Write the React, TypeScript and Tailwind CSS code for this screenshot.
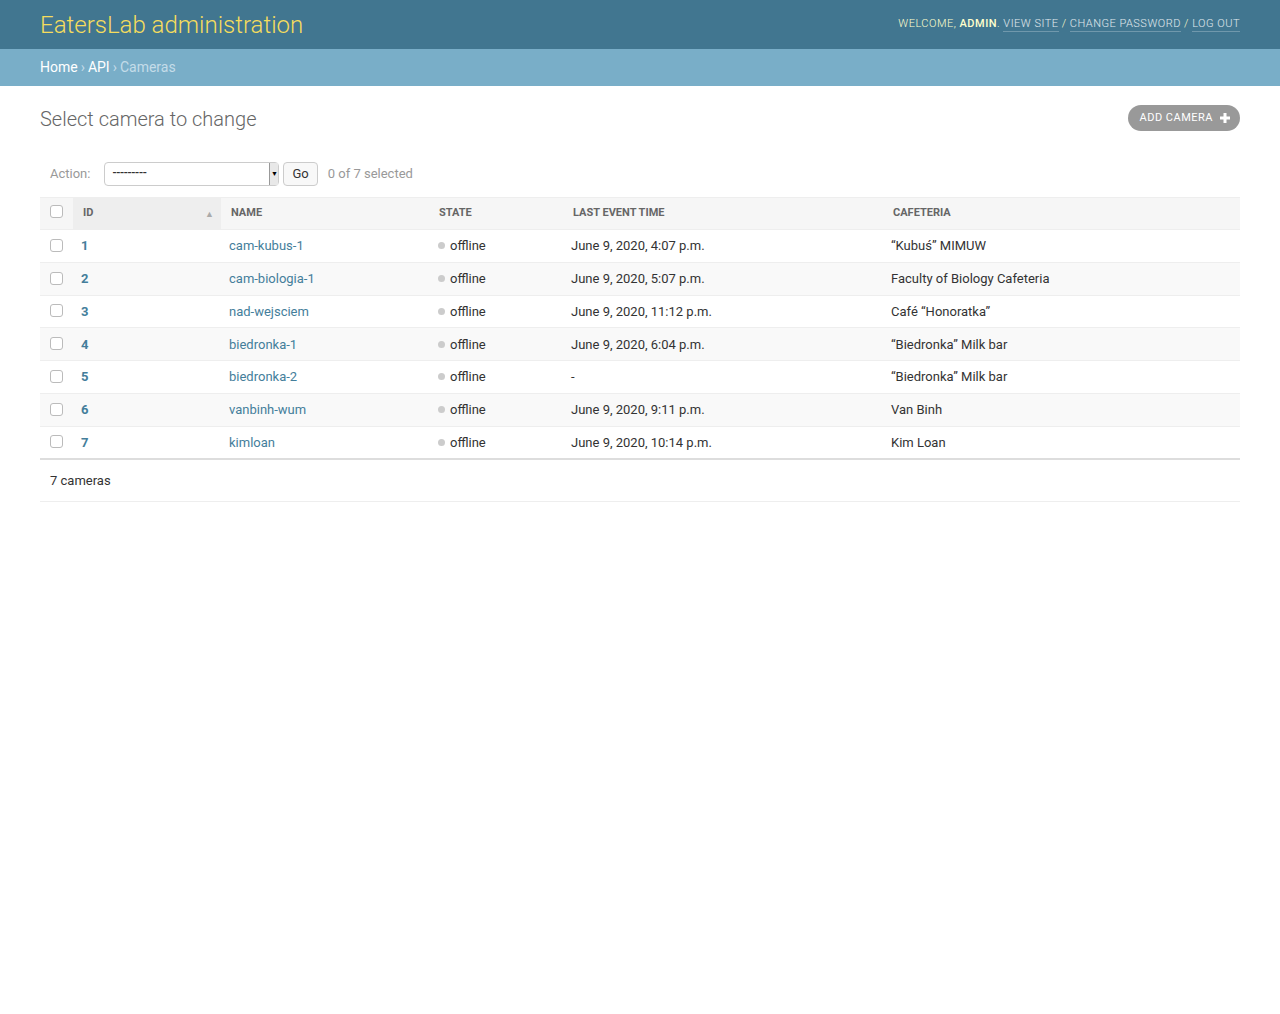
import React from 'react';

// Django admin change list — cameras
const rows = [
  { id: 1, name: 'cam-kubus-1', time: 'June 9, 2020, 4:07 p.m.', cafe: '“Kubuś” MIMUW' },
  { id: 2, name: 'cam-biologia-1', time: 'June 9, 2020, 5:07 p.m.', cafe: 'Faculty of Biology Cafeteria' },
  { id: 3, name: 'nad-wejsciem', time: 'June 9, 2020, 11:12 p.m.', cafe: 'Café “Honoratka”' },
  { id: 4, name: 'biedronka-1', time: 'June 9, 2020, 6:04 p.m.', cafe: '“Biedronka” Milk bar' },
  { id: 5, name: 'biedronka-2', time: '-', cafe: '“Biedronka” Milk bar' },
  { id: 6, name: 'vanbinh-wum', time: 'June 9, 2020, 9:11 p.m.', cafe: 'Van Binh' },
  { id: 7, name: 'kimloan', time: 'June 9, 2020, 10:14 p.m.', cafe: 'Kim Loan' },
];

function Checkbox() {
  return <span className="inline-block w-[13px] h-[13px] rounded-[3px] border border-[#bbb] bg-white align-middle -mt-[3px]" />;
}

export default function App() {
  return (
    <div className="min-h-[1014px] bg-white text-[#333]" style={{ fontFamily: 'Roboto, "Liberation Sans", sans-serif' }}>
      <header className="h-[49px] bg-[#417690] px-10 flex items-center justify-between">
        <h1 className="text-[24px] font-light text-[#f5dd5d] leading-none">EatersLab administration</h1>
        <div className="text-[11px] tracking-[0.5px] uppercase text-[#ffc] font-light flex items-center">
          <span>Welcome,&nbsp;</span>
          <strong className="font-medium">admin</strong>
          <span>.&nbsp;</span>
          <a className="text-white/85 border-b border-white/25 leading-[14px]">View site</a>
          <span>&nbsp;/&nbsp;</span>
          <a className="text-white/85 border-b border-white/25 leading-[14px]">Change password</a>
          <span>&nbsp;/&nbsp;</span>
          <a className="text-white/85 border-b border-white/25 leading-[14px]">Log out</a>
        </div>
      </header>

      <div className="h-[37px] bg-[#79aec8] px-10 flex items-center text-[14px] text-[#c4dce8]">
        <a className="text-white">Home</a>
        <span className="mx-[3px]">›</span>
        <a className="text-white">API</a>
        <span className="mx-[3px]">›</span>
        <span>Cameras</span>
      </div>

      <main className="px-10 pt-[18px]">
        <div className="flex items-center justify-between">
          <h1 className="text-[20px] font-light text-[#666] leading-[30px]">Select camera to change</h1>
          <a className="h-[26px] -mt-[2px] pl-3 pr-[10px] rounded-[15px] bg-[#999] text-white text-[11px] tracking-[0.5px] uppercase flex items-center gap-[7px]">
            Add camera
            <svg width="10" height="10" viewBox="0 0 10 10" className="fill-white">
              <rect x="3.5" y="0" width="3" height="10" />
              <rect x="0" y="3.5" width="10" height="3" />
            </svg>
          </a>
        </div>

        <div className="mt-[27px] h-[26px] px-[10px] flex items-center text-[13px] text-[#999]">
          <span className="mr-[14px]">Action:</span>
          <div className="w-[175px] h-[24px] border border-[#ccc] rounded-[4px] bg-white flex items-center justify-between pl-[7px] pr-0 text-[#333]">
            <span className="text-[12px] font-medium leading-none -mt-[2px] tracking-[-0.3px]">---------</span>
            <span className="w-[9px] h-[22px] border-l border-[#999] bg-[#e8e8e8] flex items-center justify-center text-[7px] text-black">▼</span>
          </div>
          <span className="ml-[4px] h-[24px] px-[8px] border border-[#ccc] rounded-[4px] bg-[#f8f8f8] text-[#333] flex items-center">Go</span>
          <span className="ml-[10px]">0 of 7 selected</span>
        </div>

        <table className="mt-[10px] w-full border-collapse text-[13px]">
          <thead>
            <tr className="h-[32px] bg-[#f6f6f6] border-t border-b border-[#eee] text-[11px] font-bold uppercase text-[#666] text-left">
              <th className="w-[33px] pl-[10px]"><Checkbox /></th>
              <th className="w-[148px] bg-[#eee] px-[10px]">
                <div className="flex items-center justify-between">
                  <span>ID</span>
                  <span className="text-[9px] text-[#aaa] mr-[-3px] mt-[2px]">▲</span>
                </div>
              </th>
              <th className="w-[210px] px-[10px]">Name</th>
              <th className="w-[134px] px-[8px]">State</th>
              <th className="w-[320px] px-[8px]">Last event time</th>
              <th className="px-[8px]">Cafeteria</th>
            </tr>
          </thead>
          <tbody>
            {rows.map((r, i) => (
              <tr key={r.id} className={`h-[32.8px] border-b border-[#eee] ${i % 2 === 1 ? 'bg-[#f9f9f9]' : 'bg-white'} ${i === rows.length - 1 ? 'border-b-[2px] border-b-[#ddd]' : ''}`}>
                <td className="pl-[10px]"><Checkbox /></td>
                <td className="px-[8px] font-bold text-[#447e9b]">{r.id}</td>
                <td className="px-[8px] text-[#447e9b]">{r.name}</td>
                <td className="px-[7px]">
                  <span className="inline-block w-[7px] h-[7px] rounded-full bg-[#ccc] align-middle mr-[5px] -mt-[2px]" />
                  offline
                </td>
                <td className="px-[6px]">{r.time}</td>
                <td className="px-[6px]">{r.cafe}</td>
              </tr>
            ))}
          </tbody>
        </table>

        <div className="h-[42px] px-[10px] flex items-center text-[13px] border-b border-[#eee]">7 cameras</div>
      </main>
    </div>
  );
}
